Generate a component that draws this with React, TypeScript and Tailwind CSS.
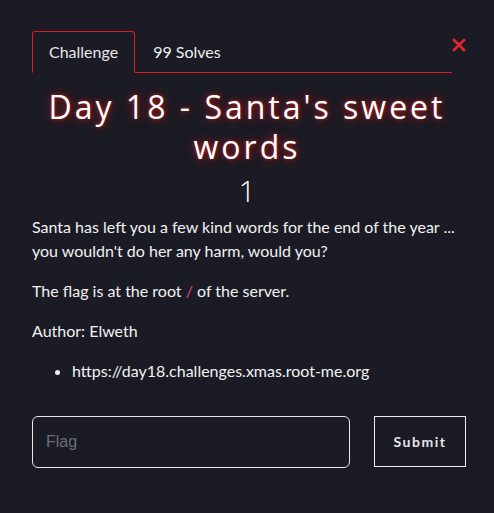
import { useState } from 'react'

function CloseIcon() {
  return (
    <svg viewBox="0 0 14 14" className="h-[14px] w-[14px]">
      <path d="M2 2 L12 12 M12 2 L2 12" stroke="#e8262b" strokeWidth="2.6" strokeLinecap="square" />
    </svg>
  )
}

export default function App() {
  const [flag, setFlag] = useState('')
  return (
    <div className="min-h-[513px] w-full bg-[#1a1b24] pl-[32px] pr-[28px] pt-[31px] font-['Lato','Noto_Sans',sans-serif] text-[16px] text-[#f2f2f2]">
      {/* onglets */}
      <div className="flex items-end">
        <div className="flex flex-1 border-b border-[#e01b1b]">
          <button
            type="button"
            className="-mb-px h-[42px] rounded-t-[3px] border border-[#e01b1b] border-b-[#1a1b24] px-4 text-[16px] text-[#e6e6e6]"
          >
            Challenge
          </button>
          <button type="button" className="h-[41px] pl-[18px] text-[16px] text-[#f0f0f0]">
            99 Solves
          </button>
        </div>
        <button type="button" className="mb-[20px] self-start pt-[7px]" aria-label="close">
          <CloseIcon />
        </button>
      </div>

      {/* titre */}
      <h1 className="mt-[14px] pr-[4px] text-center font-['Open_Sans',sans-serif] text-[32px] leading-[40px] tracking-[3px] text-white [text-shadow:0_0_4px_#d01a1add,0_0_12px_#c01818aa]">
        Day 18 - Santa's sweet words
      </h1>
      <div className="mt-[7px] pr-[4px] text-center font-['Open_Sans',sans-serif] text-[30px] leading-[34px] font-light text-white">
        1
      </div>

      {/* description */}
      <div className="mt-[7px] leading-[24px]">
        <p>
          Santa has left you a few kind words for the end of the year ...
          <br />
          you wouldn't do her any harm, would you?
        </p>
        <p className="mt-4">
          The flag is at the root <span className="text-[#e83e8c]">/</span> of the server.
        </p>
        <p className="mt-4">Author: Elweth</p>
        <ul className="mt-4 list-disc pl-[40px]">
          <li>https://day18.challenges.xmas.root-me.org</li>
        </ul>
      </div>

      {/* formulaire */}
      <div className="mt-[33px] flex items-start gap-[24px]">
        <input
          value={flag}
          onChange={(e) => setFlag(e.target.value)}
          placeholder="Flag"
          className="h-[52px] w-[318px] rounded-[6px] border border-[#e8e8e8] bg-transparent px-[13px] font-['Liberation_Sans',sans-serif] text-[16px] text-white outline-none placeholder:text-[#6c6e76]"
        />
        <button
          type="button"
          className="h-[51px] w-[92px] border border-[#eeeeee] text-[14px] font-bold tracking-[1.5px] text-[#e6e6e6]"
        >
          Submit
        </button>
      </div>
    </div>
  )
}
